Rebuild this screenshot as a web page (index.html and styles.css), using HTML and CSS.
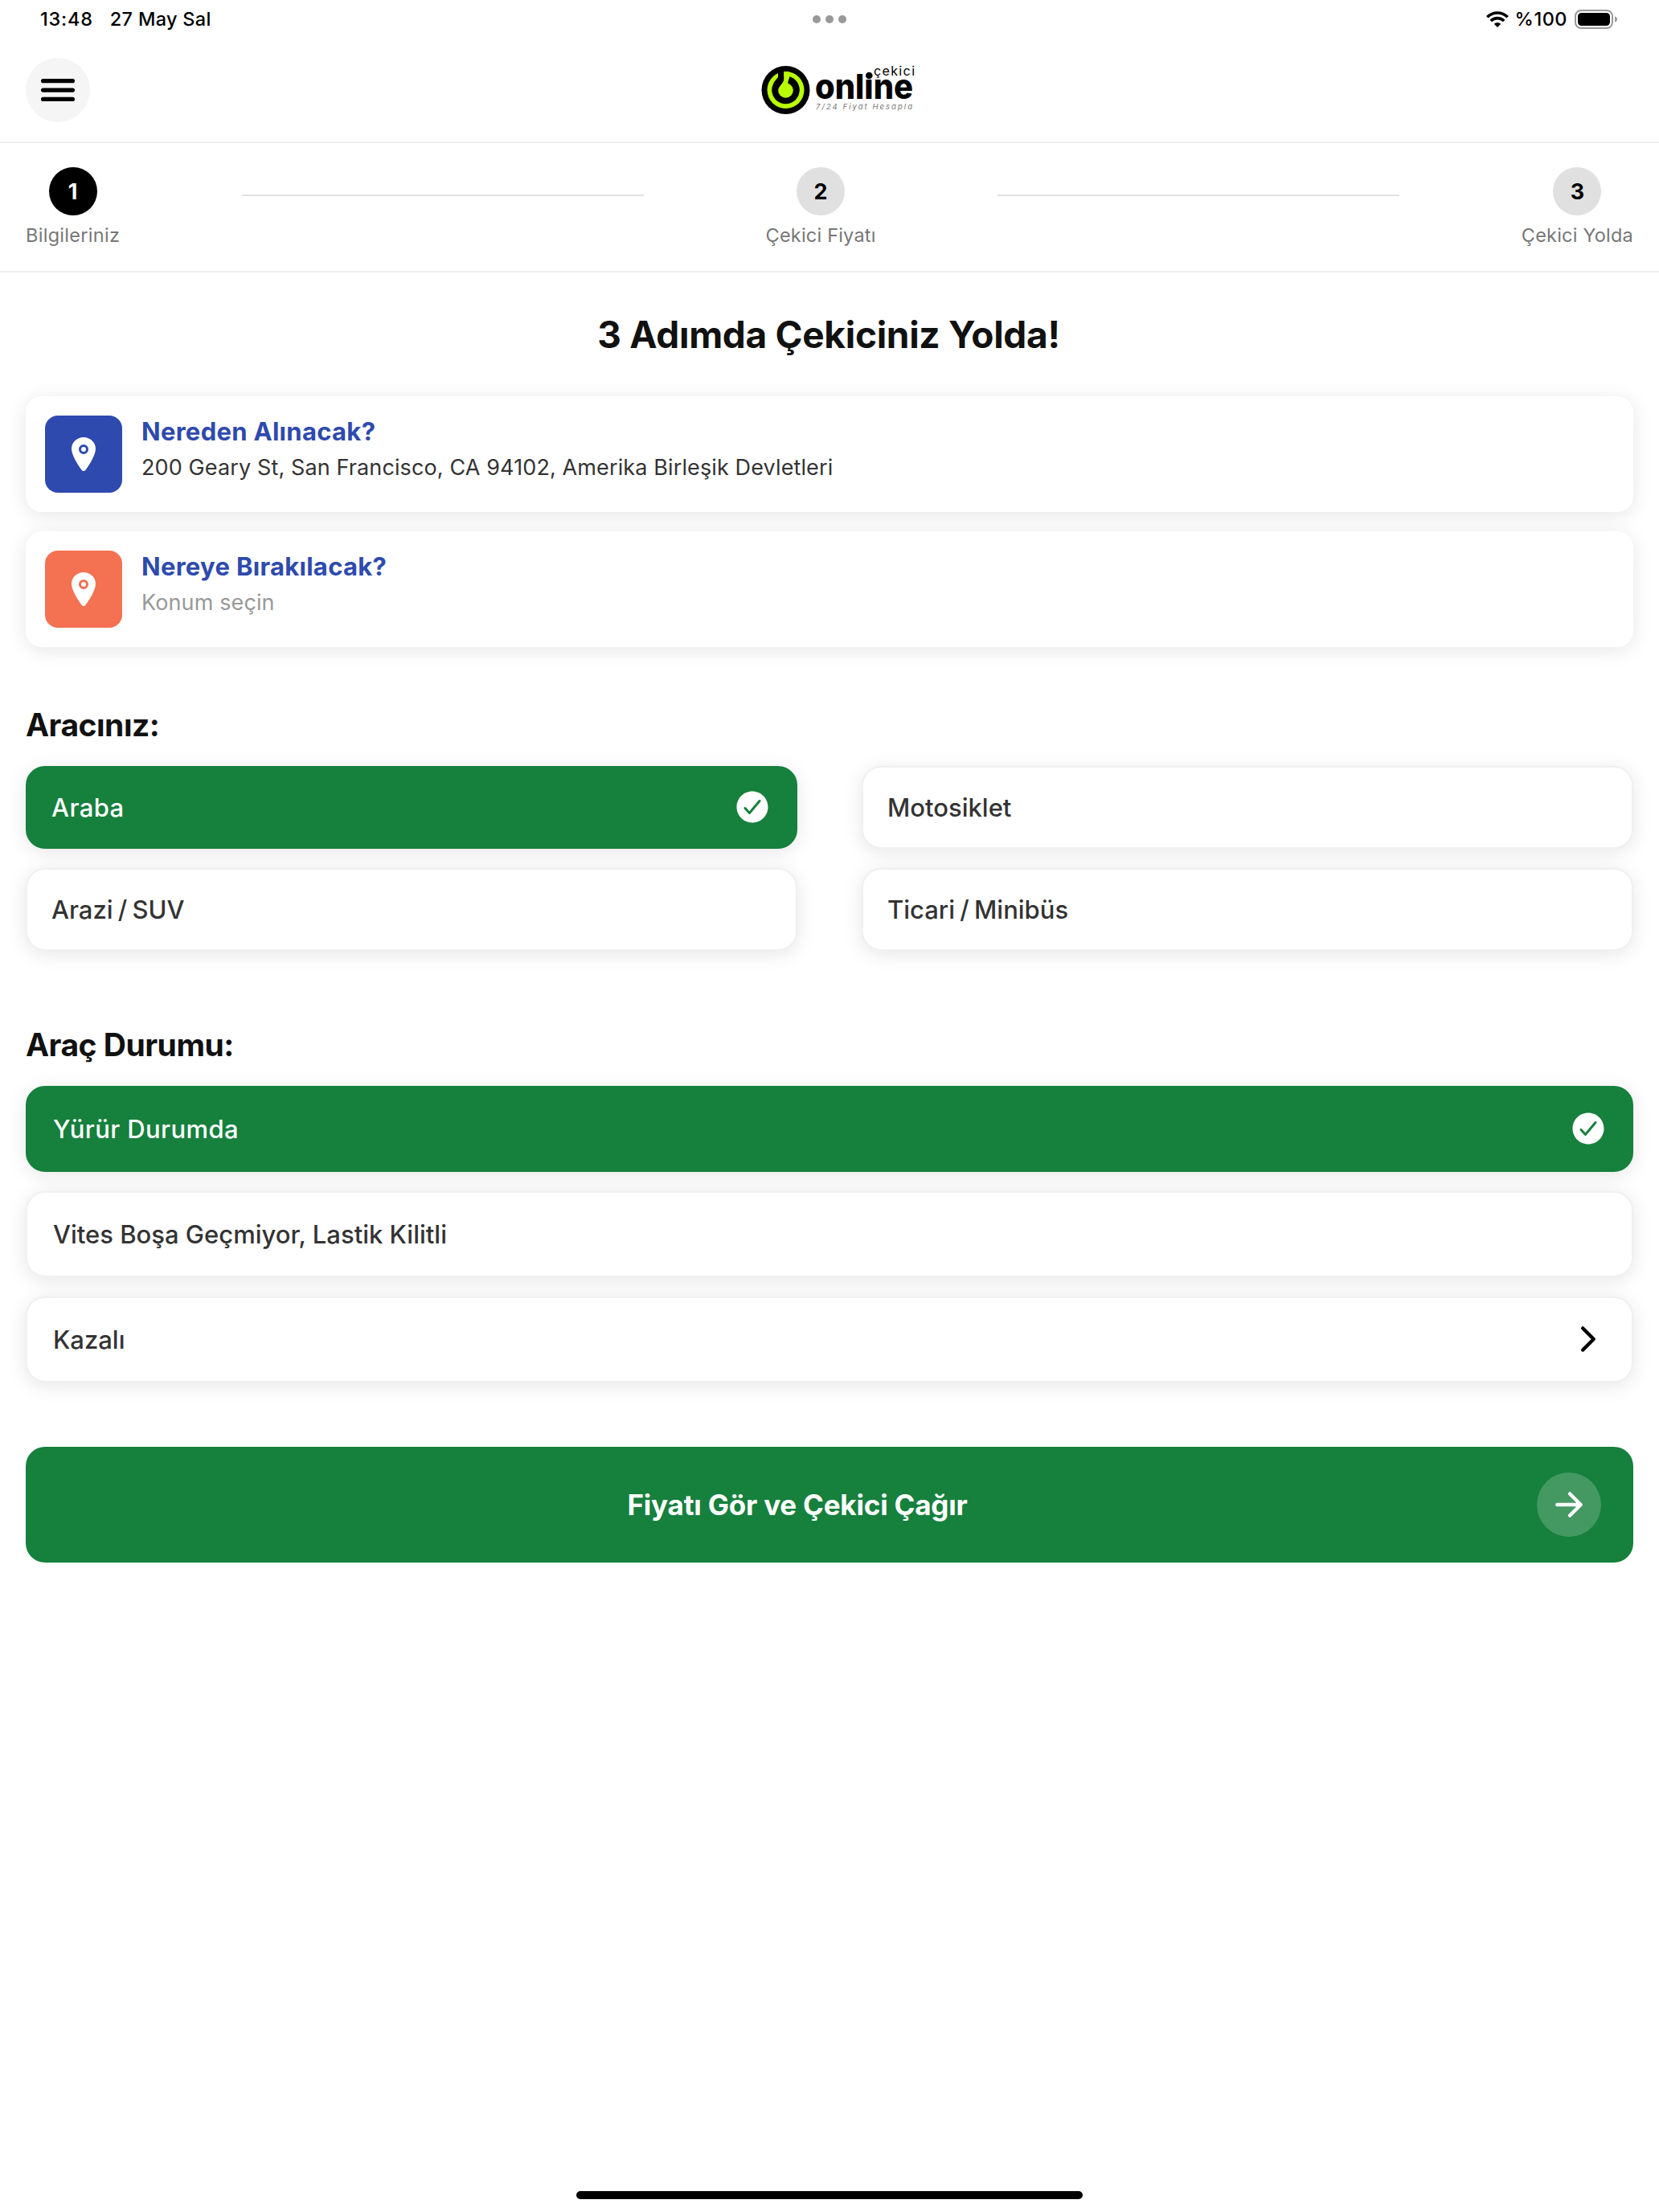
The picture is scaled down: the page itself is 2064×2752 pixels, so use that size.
FILE: index.html
```html
<!DOCTYPE html>
<html lang="tr">
<head>
    <meta charset="UTF-8">
    <meta name="viewport" content="width=device-width, initial-scale=1.0">
    <title>Online Çekici</title>
    <link rel="stylesheet" href="styles.css">
</head>
<body>
    <div class="status-bar">
        <div class="status-left">
            <span class="time">13:48</span>
            <span class="date">27 May Sal</span>
        </div>
        <div class="dots"><i></i><i></i><i></i></div>
        <div class="status-right">
            <svg class="wifi" viewBox="0 0 28 20" fill="none" stroke="#000" stroke-width="3.6">
                <path d="M1.3 7.2a18 18 0 0 1 25.4 0"/>
                <path d="M5.8 12a11.6 11.6 0 0 1 16.4 0"/>
                <path d="M14 20l-4.2-4.3a6 6 0 0 1 8.4 0z" fill="#000" stroke="none"/>
            </svg>
            <span class="percent">%100</span>
            <svg class="battery" viewBox="0 0 54 24">
                <rect x="1" y="1" width="46" height="22" rx="7" fill="none" stroke="#999" stroke-width="2"/>
                <rect x="4" y="4" width="40" height="16" rx="4.5"/>
                <path d="M50 8.2c2 .8 3 2 3 3.8s-1 3-3 3.8z" fill="#999"/>
            </svg>
        </div>
    </div>

    <header>
        <button class="menu-button">
            <svg viewBox="0 0 512 512"><path d="M88 152h336M88 256h336M88 360h336" fill="none" stroke="#000" stroke-width="48" stroke-linecap="round"/></svg>
        </button>
        <svg class="logo" viewBox="0 0 192 64">
            <circle cx="31.5" cy="32" r="30"/>
            <circle cx="31.5" cy="32" r="23" fill="#b9ff00"/>
            <circle cx="31.5" cy="32" r="17.3"/>
            <path d="M22 8h7.5v13l-6 8-7-6 5.5-7z"/>
            <path d="M29.5 9h6.5l-1.5 11-5 3z" fill="#b9ff00"/>
            <path d="M29.5 9v8c0 4-2.2 6.5-4.6 9.5-1.7 2-2.7 4.2-2.7 6a9.3 9.3 0 0 0 18.6 0c0-4-2.3-7.4-6-9l2-7.2L33.8 9z" fill="#b9ff00"/>
            <path d="M36.3 15.5l-2.3 8c3.8 1.4 7.2 5 7.2 9l7-3c-1-7-5.5-12-11.9-14z"/>
            <text class="logo-name" x="68" y="43" textLength="122" lengthAdjust="spacingAndGlyphs">onl<tspan>ı</tspan>ne</text>
            <circle cx="135.3" cy="14" r="4.3"/>
            <text class="logo-top" x="141" y="14" textLength="51">çekici</text>
            <text class="logo-sub" x="69" y="55.5" textLength="120">7/24 Fiyat Hesapla</text>
        </svg>
    </header>

    <nav class="steps">
        <div class="step active"><b>1</b><span>Bilgileriniz</span></div>
        <div class="line"></div>
        <div class="step"><b>2</b><span>Çekici Fiyatı</span></div>
        <div class="line"></div>
        <div class="step"><b>3</b><span>Çekici Yolda</span></div>
    </nav>

    <main>
        <h1>3 Adımda Çekiciniz Yolda!</h1>

        <section class="locations">
            <div class="location">
                <div class="pin from">
                    <svg viewBox="0 0 512 512" fill="#fff"><circle cx="256" cy="192" r="32"/><path d="M256 32c-88.22 0-160 68.65-160 153 0 40.17 18.31 93.59 54.42 158.78 29 52.34 62.55 99.67 80 123.22a31.75 31.75 0 0 0 51.22 0c17.42-23.55 51-70.88 80-123.22C397.69 278.61 416 225.19 416 185c0-84.35-71.78-153-160-153zm0 224a64 64 0 1 1 64-64 64.07 64.07 0 0 1-64 64z"/></svg>
                </div>
                <div class="location-text">
                    <h3>Nereden Alınacak?</h3>
                    <p>200 Geary St, San Francisco, CA 94102, Amerika Birleşik Devletleri</p>
                </div>
            </div>
            <div class="location">
                <div class="pin to">
                    <svg viewBox="0 0 512 512" fill="#fff"><circle cx="256" cy="192" r="32"/><path d="M256 32c-88.22 0-160 68.65-160 153 0 40.17 18.31 93.59 54.42 158.78 29 52.34 62.55 99.67 80 123.22a31.75 31.75 0 0 0 51.22 0c17.42-23.55 51-70.88 80-123.22C397.69 278.61 416 225.19 416 185c0-84.35-71.78-153-160-153zm0 224a64 64 0 1 1 64-64 64.07 64.07 0 0 1-64 64z"/></svg>
                </div>
                <div class="location-text">
                    <h3>Nereye Bırakılacak?</h3>
                    <p class="empty">Konum seçin</p>
                </div>
            </div>
        </section>

        <h2>Aracınız:</h2>
        <section class="vehicles">
            <div class="option selected">
                <span>Araba</span>
                <svg class="icon" viewBox="0 0 512 512" fill="#fff"><path d="M256 48C141.31 48 48 141.31 48 256s93.31 208 208 208 208-93.31 208-208S370.69 48 256 48zm108.25 138.29l-134.4 160a16 16 0 0 1-12 5.71h-.27a16 16 0 0 1-11.89-5.3l-57.6-64a16 16 0 1 1 23.78-21.4l45.29 50.32 122.59-145.91a16 16 0 0 1 24.5 20.58z"/></svg>
            </div>
            <div class="option"><span>Motosiklet</span></div>
            <div class="option"><span>Arazi / SUV</span></div>
            <div class="option"><span>Ticari / Minibüs</span></div>
        </section>

        <h2>Araç Durumu:</h2>
        <section class="conditions">
            <div class="option selected">
                <span>Yürür Durumda</span>
                <svg class="icon" viewBox="0 0 512 512" fill="#fff"><path d="M256 48C141.31 48 48 141.31 48 256s93.31 208 208 208 208-93.31 208-208S370.69 48 256 48zm108.25 138.29l-134.4 160a16 16 0 0 1-12 5.71h-.27a16 16 0 0 1-11.89-5.3l-57.6-64a16 16 0 1 1 23.78-21.4l45.29 50.32 122.59-145.91a16 16 0 0 1 24.5 20.58z"/></svg>
            </div>
            <div class="option"><span>Vites Boşa Geçmiyor, Lastik Kilitli</span></div>
            <div class="option">
                <span>Kazalı</span>
                <svg class="icon" viewBox="0 0 512 512"><path d="M184 112l144 144-144 144" fill="none" stroke="#000" stroke-width="48" stroke-linecap="round" stroke-linejoin="round"/></svg>
            </div>
        </section>

        <button class="submit">
            <span>Fiyatı Gör ve Çekici Çağır</span>
            <i class="arrow">
                <svg class="icon" viewBox="0 0 512 512"><path d="M268 112l144 144-144 144M392 256H100" fill="none" stroke="#fff" stroke-width="48" stroke-linecap="round" stroke-linejoin="round"/></svg>
            </i>
        </button>
    </main>

    <footer><div class="home-bar"></div></footer>
</body>
</html>
```
FILE: styles.css
```css
* {
    box-sizing: border-box;
    margin: 0;
    padding: 0;
}

body {
    display: flex;
    flex-direction: column;
    height: 2752px;
    background-color: #fff;
    font-family: Inter, "Liberation Sans", sans-serif;
    color: #111;
}

svg {
    display: block;
}

button {
    border: none;
    font-family: inherit;
}

/* status bar */
.status-bar {
    display: grid;
    grid-template-columns: 1fr auto 1fr;
    align-items: center;
    height: 48px;
    padding: 0 51px 0 50px;
    font-size: 23.5px;
    font-weight: 500;
    line-height: 28px;
    color: #000;
}

.status-left {
    display: flex;
    gap: 21px;
    margin-top: -1px;
}

.time {
    letter-spacing: 0.8px;
}

.date {
    letter-spacing: 0.3px;
}

.dots {
    display: flex;
    gap: 6px;
}

.dots i {
    width: 10px;
    height: 10px;
    border-radius: 50%;
    background-color: #999;
}

.status-right {
    display: flex;
    align-items: center;
    justify-content: flex-end;
}

.wifi {
    width: 28px;
    height: 20px;
    margin-right: 8px;
}

.percent {
    margin-top: -1px;
    margin-right: 9px;
    letter-spacing: 0.5px;
}

.battery {
    width: 54px;
    height: 24px;
}

/* header */
header {
    display: grid;
    grid-template-columns: 1fr auto 1fr;
    align-items: center;
    height: 130px;
    padding: 0 32px;
    border-bottom: 2px solid #f0f0f0;
}

.menu-button {
    display: flex;
    align-items: center;
    justify-content: center;
    width: 80px;
    height: 80px;
    border-radius: 50%;
    background-color: #f5f5f5;
}

.menu-button svg {
    width: 56px;
    height: 56px;
}

.logo {
    width: 192px;
    height: 64px;
    overflow: visible;
    transform: translateX(10px);
}

.logo-name {
    font-size: 43px;
    font-weight: 800;
}

.logo-top {
    font-size: 16px;
}

.logo-sub {
    font-size: 9.5px;
    font-style: italic;
    fill: #777;
}

/* steps */
.steps {
    display: flex;
    justify-content: space-between;
    height: 161px;
    padding: 30px 32px 0;
    border-bottom: 2px solid #f0f0f0;
}

.step {
    display: flex;
    flex-direction: column;
    align-items: center;
}

.step b {
    width: 60px;
    height: 60px;
    border-radius: 50%;
    background-color: #e0e0e0;
    color: #000;
    font-size: 27px;
    font-weight: 700;
    line-height: 61px;
    text-align: center;
}

.step span {
    margin-top: 10px;
    font-size: 23.5px;
    line-height: 30px;
    letter-spacing: 0.2px;
    color: #777;
}

.step.active b {
    background-color: #000;
    color: #fff;
}

.step.active span {
    letter-spacing: 0.3px;
}

.line {
    width: 500px;
    height: 2px;
    margin-top: 34px;
    background-color: #e0e0e0;
}

/* content */
main {
    padding: 0 32px;
}

h1 {
    margin-top: 48px;
    padding-right: 2px;
    font-size: 46px;
    font-weight: 700;
    line-height: 58px;
    text-align: center;
    letter-spacing: -0.3px;
}

h2 {
    font-size: 39px;
    font-weight: 700;
    line-height: 48px;
    letter-spacing: -0.5px;
}

.locations {
    display: flex;
    flex-direction: column;
    gap: 24px;
    margin: 48px 0 73px;
}

.location {
    display: flex;
    align-items: center;
    gap: 24px;
    height: 144px;
    padding: 24px;
    border-radius: 20px;
    background-color: #fff;
    box-shadow: 0 4px 24px rgba(0, 0, 0, 0.1);
}

.pin {
    display: flex;
    align-items: center;
    justify-content: center;
    width: 96px;
    height: 96px;
    border-radius: 16px;
}

.pin svg {
    width: 48px;
    height: 48px;
}

.from {
    background-color: #2e4aae;
}

.to {
    background-color: #f47152;
}

.location-text {
    height: 96px;
}

.location-text h3 {
    font-size: 31px;
    font-weight: 700;
    line-height: 40px;
    letter-spacing: 0.3px;
    color: #2e4aae;
}

.location-text p {
    margin-top: 6px;
    font-size: 27px;
    line-height: 38px;
    letter-spacing: 0.12px;
    color: #333;
}

.location-text .empty {
    color: #999;
}

.option {
    display: flex;
    align-items: center;
    justify-content: space-between;
    border: 2px solid #f0f0f0;
    border-radius: 24px;
    background-color: #fff;
    box-shadow: 0 4px 24px rgba(0, 0, 0, 0.1);
    color: #333;
    font-size: 31px;
    font-weight: 500;
}

.selected {
    border-color: #16803d;
    background-color: #16803d;
    color: #fff;
    letter-spacing: 0.4px;
}

.icon {
    width: 48px;
    height: 48px;
}

.option .icon {
    margin-bottom: 1px;
}

.vehicles {
    display: grid;
    grid-template-columns: 1fr 1fr;
    gap: 24px 80px;
    margin: 27px 0 93px;
    word-spacing: -2px;
}

.vehicles .option {
    height: 103px;
    padding: 0 30px;
}

.conditions {
    display: flex;
    flex-direction: column;
    gap: 24px;
    margin: 27px 0 80px;
}

.conditions .option {
    height: 107px;
    padding: 0 30px 0 32px;
}

.submit {
    display: flex;
    align-items: center;
    width: 100%;
    height: 144px;
    padding: 0 40px;
    border-radius: 24px;
    background-color: #16803d;
    color: #fff;
    font-size: 35px;
    font-weight: 700;
    letter-spacing: -0.2px;
}

.submit span {
    flex: 1;
    text-align: center;
}

.arrow {
    display: flex;
    align-items: center;
    justify-content: center;
    width: 80px;
    height: 80px;
    border-radius: 50%;
    background-color: rgba(255, 255, 255, 0.2);
}

footer {
    display: flex;
    justify-content: center;
    margin-top: auto;
    padding-bottom: 16px;
}

.home-bar {
    width: 630px;
    height: 10px;
    border-radius: 5px;
    background-color: #000;
}
```
